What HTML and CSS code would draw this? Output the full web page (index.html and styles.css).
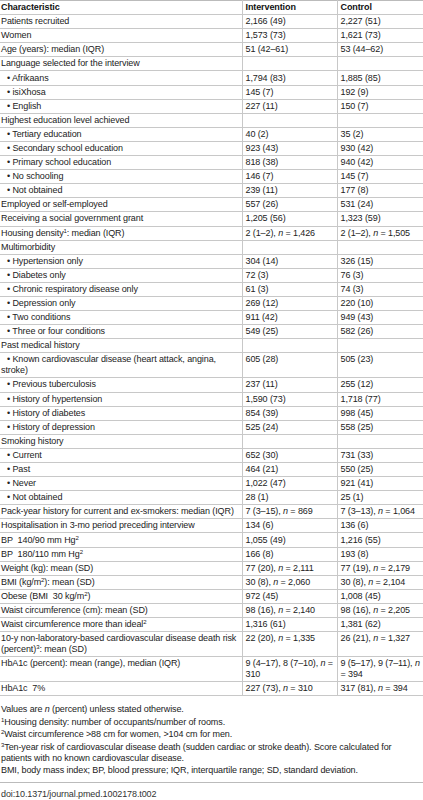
FILE: index.html
```html
<!DOCTYPE html>
<html lang="en">
<head>
    <meta charset="UTF-8">
    <meta name="viewport" content="width=device-width, initial-scale=1.0">
    <title>Table 2. Baseline characteristics</title>
    <link rel="stylesheet" href="styles.css">
</head>
<body>
    <div class="table-wrap">
        <table class="data">
            <colgroup>
                <col class="c1">
                <col class="c2">
                <col class="c3">
            </colgroup>
            <thead>
                <tr><th>Characteristic</th><th>Intervention</th><th>Control</th></tr>
            </thead>
            <tbody>
                <tr><td>Patients recruited</td><td>2,166 (49)</td><td>2,227 (51)</td></tr>
                <tr><td>Women</td><td>1,573 (73)</td><td>1,621 (73)</td></tr>
                <tr><td>Age (years): median (IQR)</td><td>51 (42–61)</td><td>53 (44–62)</td></tr>
                <tr><td>Language selected for the interview</td><td></td><td></td></tr>
                <tr><td class="sub">• Afrikaans</td><td>1,794 (83)</td><td>1,885 (85)</td></tr>
                <tr><td class="sub">• isiXhosa</td><td>145 (7)</td><td>192 (9)</td></tr>
                <tr><td class="sub">• English</td><td>227 (11)</td><td>150 (7)</td></tr>
                <tr><td>Highest education level achieved</td><td></td><td></td></tr>
                <tr><td class="sub">• Tertiary education</td><td>40 (2)</td><td>35 (2)</td></tr>
                <tr><td class="sub">• Secondary school education</td><td>923 (43)</td><td>930 (42)</td></tr>
                <tr><td class="sub">• Primary school education</td><td>818 (38)</td><td>940 (42)</td></tr>
                <tr><td class="sub">• No schooling</td><td>146 (7)</td><td>145 (7)</td></tr>
                <tr><td class="sub">• Not obtained</td><td>239 (11)</td><td>177 (8)</td></tr>
                <tr><td>Employed or self-employed</td><td>557 (26)</td><td>531 (24)</td></tr>
                <tr><td>Receiving a social government grant</td><td>1,205 (56)</td><td>1,323 (59)</td></tr>
                <tr><td>Housing density<sup>1</sup>: median (IQR)</td><td>2 (1–2), <i>n</i> = 1,426</td><td>2 (1–2), <i>n</i> = 1,505</td></tr>
                <tr><td>Multimorbidity</td><td></td><td></td></tr>
                <tr><td class="sub">• Hypertension only</td><td>304 (14)</td><td>326 (15)</td></tr>
                <tr><td class="sub">• Diabetes only</td><td>72 (3)</td><td>76 (3)</td></tr>
                <tr><td class="sub">• Chronic respiratory disease only</td><td>61 (3)</td><td>74 (3)</td></tr>
                <tr><td class="sub">• Depression only</td><td>269 (12)</td><td>220 (10)</td></tr>
                <tr><td class="sub">• Two conditions</td><td>911 (42)</td><td>949 (43)</td></tr>
                <tr><td class="sub">• Three or four conditions</td><td>549 (25)</td><td>582 (26)</td></tr>
                <tr><td>Past medical history</td><td></td><td></td></tr>
                <tr><td class="sub">• Known cardiovascular disease (heart attack, angina, stroke)</td><td>605 (28)</td><td>505 (23)</td></tr>
                <tr><td class="sub">• Previous tuberculosis</td><td>237 (11)</td><td>255 (12)</td></tr>
                <tr><td class="sub">• History of hypertension</td><td>1,590 (73)</td><td>1,718 (77)</td></tr>
                <tr><td class="sub">• History of diabetes</td><td>854 (39)</td><td>998 (45)</td></tr>
                <tr><td class="sub">• History of depression</td><td>525 (24)</td><td>558 (25)</td></tr>
                <tr><td>Smoking history</td><td></td><td></td></tr>
                <tr><td class="sub">• Current</td><td>652 (30)</td><td>731 (33)</td></tr>
                <tr><td class="sub">• Past</td><td>464 (21)</td><td>550 (25)</td></tr>
                <tr><td class="sub">• Never</td><td>1,022 (47)</td><td>921 (41)</td></tr>
                <tr><td class="sub">• Not obtained</td><td>28 (1)</td><td>25 (1)</td></tr>
                <tr><td>Pack-year history for current and ex-smokers: median (IQR)</td><td>7 (3–15), <i>n</i> = 869</td><td>7 (3–13), <i>n</i> = 1,064</td></tr>
                <tr><td>Hospitalisation in 3-mo period preceding interview</td><td>134 (6)</td><td>136 (6)</td></tr>
                <tr><td>BP&nbsp; 140/90 mm Hg<sup>2</sup></td><td>1,055 (49)</td><td>1,216 (55)</td></tr>
                <tr><td>BP&nbsp; 180/110 mm Hg<sup>2</sup></td><td>166 (8)</td><td>193 (8)</td></tr>
                <tr><td>Weight (kg): mean (SD)</td><td>77 (20), <i>n</i> = 2,111</td><td>77 (19), <i>n</i> = 2,179</td></tr>
                <tr><td>BMI (kg/m<sup>2</sup>): mean (SD)</td><td>30 (8), <i>n</i> = 2,060</td><td>30 (8), <i>n</i> = 2,104</td></tr>
                <tr><td>Obese (BMI&nbsp; 30 kg/m<sup>2</sup>)</td><td>972 (45)</td><td>1,008 (45)</td></tr>
                <tr><td>Waist circumference (cm): mean (SD)</td><td>98 (16), <i>n</i> = 2,140</td><td>98 (16), <i>n</i> = 2,205</td></tr>
                <tr><td>Waist circumference more than ideal<sup>2</sup></td><td>1,316 (61)</td><td>1,381 (62)</td></tr>
                <tr><td>10-y non-laboratory-based cardiovascular disease death risk (percent)<sup>3</sup>: mean (SD)</td><td>22 (20), <i>n</i> = 1,335</td><td>26 (21), <i>n</i> = 1,327</td></tr>
                <tr><td>HbA1c (percent): mean (range), median (IQR)</td><td>9 (4–17), 8 (7–10), <i>n</i> = 310</td><td>9 (5–17), 9 (7–11), <i>n</i> = 394</td></tr>
                <tr><td>HbA1c&nbsp; 7%</td><td>227 (73), <i>n</i> = 310</td><td>317 (81), <i>n</i> = 394</td></tr>
            </tbody>
        </table>
    </div>

    <div class="notes">
        <p>Values are <i>n</i> (percent) unless stated otherwise.</p>
        <p><sup>1</sup>Housing density: number of occupants/number of rooms.</p>
        <p><sup>2</sup>Waist circumference &gt;88 cm for women, &gt;104 cm for men.</p>
        <p><sup>3</sup>Ten-year risk of cardiovascular disease death (sudden cardiac or stroke death). Score calculated for patients with no known cardiovascular disease.</p>
        <p>BMI, body mass index; BP, blood pressure; IQR, interquartile range; SD, standard deviation.</p>
    </div>

    <div class="doi">doi:10.1371/journal.pmed.1002178.t002</div>
</body>
</html>
```

FILE: styles.css
```css
body {
    margin: 0;
    width: 423px;
    background: #fff;
    color: #222;
    font-family: "Liberation Sans", Arial, sans-serif;
    font-size: 9px;
    letter-spacing: -0.1px;
}
.data {
    width: 423px;
    border-collapse: collapse;
    table-layout: fixed;
    border-top: 1px solid #bbb;
}
.c1 {
    width: 242px;
}
.c2 {
    width: 95px;
}
.c3 {
    width: 86px;
}
.data th,
.data td {
    padding: 1.06px 2px 1.06px 3px;
    line-height: 11px;
    text-align: left;
    vertical-align: top;
    border-bottom: 1px solid #c8c8c8;
    border-left: 1px solid #c8c8c8;
}
.data th:first-child,
.data td:first-child {
    border-left: none;
    padding-left: 1px;
}
.data th {
    font-weight: bold;
    color: #111;
}
.data td.sub {
    text-indent: 6px;
}
sup {
    font-size: 6px;
    line-height: 0;
    vertical-align: 3px;
}
.notes {
    padding: 7px 0 5px 1px;
    border-bottom: 1px solid #bbb;
}
.notes p {
    margin: 0;
    line-height: 12.5px;
}
.notes p:nth-child(4) {
    line-height: 11px;
    padding-top: 1.5px;
}
.doi {
    padding: 5px 0 0 1px;
    color: #333;
    line-height: 12px;
}
```
